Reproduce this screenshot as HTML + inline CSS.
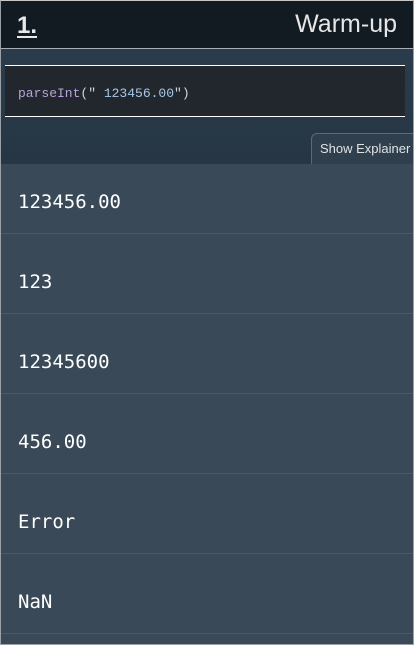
<!DOCTYPE html>
<html><head><style>
*{margin:0;padding:0;box-sizing:border-box}
body{width:414px;height:645px;overflow:hidden;background:#394957;font-family:"Liberation Sans",sans-serif;position:relative}
.frame{position:absolute;inset:0;border:1px solid #9aa0a6;border-top:1px solid #c8c8c8;pointer-events:none;z-index:5}
.hdr{position:absolute;left:0;top:0;width:414px;height:49px;background:#131b22;border-bottom:1px solid #a9aeb3;z-index:2}
.num{position:absolute;left:17px;top:12px;color:#e8e8e8;font-size:24px;font-weight:bold;text-decoration:underline;text-underline-offset:3px}
.ttl{position:absolute;right:17px;top:10px;color:#e6e6e6;font-size:25px}
.mid{position:absolute;left:0;top:49px;width:414px;height:115px;background:linear-gradient(#2a3c4c,#263644);z-index:2}
.code{position:absolute;left:5px;top:65px;width:400px;height:52px;background:#22272e;border-top:1px solid #fff;border-bottom:1px solid #fff;font-family:"Liberation Mono",monospace;font-size:13px;padding:20px 0 0 13px;color:#cfd6dd;z-index:3}
.p{color:#b9a3d8}.s{color:#a9c8e8}
.tab{position:absolute;left:311px;top:133px;width:110px;height:31px;border:1px solid #5d6a76;border-bottom:none;border-radius:6px 0 0 0;background:#2f3f4d;color:#dfe3e6;font-size:13px;padding:7px 0 0 8px;z-index:3}
.rows{position:absolute;left:0;top:154px;width:414px}
.row{height:80px;border-bottom:1px solid #485966;background:#394957;color:#fff;font-family:"DejaVu Sans Mono","Liberation Mono",monospace;font-size:19px;padding:37px 0 0 18px}
</style></head><body>
<div class="hdr"><span class="num">1.</span><span class="ttl">Warm-up</span></div>
<div class="mid"></div>
<div class="code"><span class="p">parseInt</span>(" <span class="s">123456.00</span>")</div>
<div class="tab">Show Explainer</div>
<div class="rows">
<div class="row">123456.00</div>
<div class="row">123</div>
<div class="row">12345600</div>
<div class="row">456.00</div>
<div class="row">Error</div>
<div class="row">NaN</div>
</div>
<div class="frame"></div>
</body></html>
